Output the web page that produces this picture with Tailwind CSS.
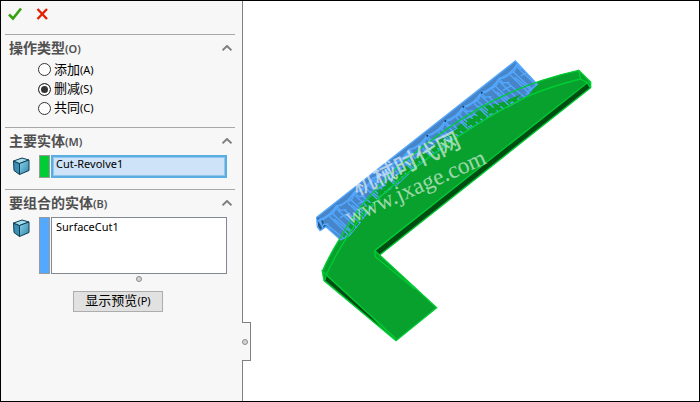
<!DOCTYPE html>
<html lang="zh-CN">
<head>
    <meta charset="UTF-8">
    <meta name="viewport" content="width=device-width, initial-scale=1.0">
    <title>组合</title>
    <script src="https://cdn.jsdelivr.net/npm/@tailwindcss/browser@4"></script>
</head>
<body class="font-['Noto_Sans','Noto_Sans_CJK_SC',sans-serif] text-black">
<div class="flex min-h-screen border border-black bg-white">

    <!-- Property panel -->
    <aside class="relative w-[242px] shrink-0 bg-[#f7f7f7] border-r border-[#808080] pl-1 pr-[7px]">
        <div class="flex h-[33px] pt-1.5 pl-[3px] gap-3.5">
            <button type="button" aria-label="确定" class="size-3.5">
                <svg viewBox="0 0 14 14" class="size-3.5" fill="none" stroke="#37a00f" stroke-width="2.6"><path d="M1 7.500 5 11.500 13 1.500"/></svg>
            </button>
            <button type="button" aria-label="取消" class="size-3.5">
                <svg viewBox="0 0 14 14" class="size-3.5" fill="none" stroke="#e02000" stroke-width="2.4"><path d="M1.500 2 11 12M11 2 1.500 12"/></svg>
            </button>
        </div>

        <!-- Operation type -->
        <section class="border-t border-[#a8a8a8] pt-px pb-2.5">
            <div class="flex h-6 items-center justify-between pl-1 pr-[3px]">
                <h2 id="opType" class="text-sm leading-6 font-bold text-[#505050]">操作类型<span class="text-[11px] font-semibold">(O)</span></h2>
                <button type="button" aria-label="折叠操作类型">
                    <svg viewBox="0 0 10 6" class="w-2.5 h-1.5" fill="none" stroke="#808080" stroke-width="2"><path d="M.5 5.3 5 1 9.500 5.300"/></svg>
                </button>
            </div>
            <div role="radiogroup" aria-labelledby="opType" class="pl-[33px]">
                <label class="flex h-[19px] items-center gap-[3px] text-[13px]">
                    <input type="radio" name="op" class="appearance-none size-[13px] rounded-full border border-[#333] bg-white checked:bg-[#333] checked:border-[#333] checked:shadow-[inset_0_0_0_2px_white]">
                    <span>添加<span class="text-[11px]">(A)</span></span>
                </label>
                <label class="flex h-5 items-center gap-[3px] text-[13px]">
                    <input type="radio" name="op" checked class="appearance-none size-[13px] rounded-full border border-[#333] bg-white checked:bg-[#333] checked:border-[#333] checked:shadow-[inset_0_0_0_2px_white]">
                    <span>删减<span class="text-[11px]">(S)</span></span>
                </label>
                <label class="flex h-[18px] items-center gap-[3px] text-[13px]">
                    <input type="radio" name="op" class="appearance-none size-[13px] rounded-full border border-[#333] bg-white checked:bg-[#333] checked:border-[#333] checked:shadow-[inset_0_0_0_2px_white]">
                    <span>共同<span class="text-[11px]">(C)</span></span>
                </label>
            </div>
        </section>

        <!-- Main body -->
        <section class="border-t border-[#a8a8a8] pt-px pb-[11px]">
            <div class="flex h-6 items-center justify-between pl-1 pr-[3px]">
                <h2 class="text-sm leading-6 font-bold text-[#505050]"><label for="mainBody">主要实体<span class="text-[11px] font-semibold">(M)</span></label></h2>
                <button type="button" aria-label="折叠主要实体">
                    <svg viewBox="0 0 10 6" class="w-2.5 h-1.5" fill="none" stroke="#808080" stroke-width="2"><path d="M.5 5.3 5 1 9.500 5.300"/></svg>
                </button>
            </div>
            <div class="flex mt-0.5 h-[23px] pl-2 pr-2">
                <svg viewBox="0 0 17 18" class="w-[17px] h-[18px] mt-0.5 mr-[9px] shrink-0" stroke="#0d3c55" stroke-linejoin="round">
                    <defs>
                        <linearGradient id="cubeFace" x1="0" y1="0" x2="1" y2="1"><stop offset="0" stop-color="#8fd3ea"/><stop offset="1" stop-color="#2f86a8"/></linearGradient>
                    </defs>
                    <path d="M.5 4 6.500 6.500V17.500L1 13.500Z" fill="#3b8fb2"/>
                    <path d="M.5 4 9 1 16 3 6.500 6.500Z" fill="#a5dcec"/>
                    <path d="M6.500 6.500 16 3V13.500L6.500 17.500Z" fill="url(#cubeFace)"/>
                </svg>
                <span class="w-[11px] mr-px bg-[#00cc33] border border-[#999] shrink-0"></span>
                <input id="mainBody" type="text" value="Cut-Revolve1" readonly class="min-w-0 flex-1 border-2 border-[#5aade0] bg-[#cee3f7] shadow-[inset_0_0_0_1px_#8fc6ee] pl-[3px] pb-1 text-[11px] outline-none">
            </div>
        </section>

        <!-- Bodies to combine -->
        <section class="border-t border-[#a8a8a8] pt-px">
            <div class="flex h-6 items-center justify-between pl-1 pr-[3px]">
                <h2 class="text-sm leading-6 font-bold text-[#505050]"><label for="combineBodies">要组合的实体<span class="text-[11px] font-semibold">(B)</span></label></h2>
                <button type="button" aria-label="折叠要组合的实体">
                    <svg viewBox="0 0 10 6" class="w-2.5 h-1.5" fill="none" stroke="#808080" stroke-width="2"><path d="M.5 5.3 5 1 9.500 5.300"/></svg>
                </button>
            </div>
            <div class="flex mt-0.5 h-[57px] pl-2 pr-2">
                <svg viewBox="0 0 17 18" class="w-[17px] h-[18px] mt-0.5 mr-[9px] shrink-0" stroke="#0d3c55" stroke-linejoin="round">
                    <path d="M.5 4 6.500 6.500V17.500L1 13.500Z" fill="#3b8fb2"/>
                    <path d="M.5 4 9 1 16 3 6.500 6.500Z" fill="#a5dcec"/>
                    <path d="M6.500 6.500 16 3V13.500L6.500 17.500Z" fill="url(#cubeFace)"/>
                </svg>
                <span class="w-[11px] mr-px bg-[#55a8ff] border border-[#999] shrink-0"></span>
                <select id="combineBodies" size="3" class="appearance-none min-w-0 flex-1 overflow-hidden border border-[#828790] bg-white text-[11px] outline-none">
                    <option class="px-1 py-px leading-4">SurfaceCut1</option>
                </select>
            </div>
            <div class="flex justify-center mt-0.5 pl-[38px]">
                <span class="size-1.5 rounded-full border border-[#8c8c8c] bg-[#d4d4d4]"></span>
            </div>
            <button type="button" class="block w-[90px] h-[21px] mt-[9px] ml-[68px] pb-1 border border-[#adadad] bg-[#e1e1e1] text-[13px] leading-4">显示预览<span class="text-[11px]">(P)</span></button>
        </section>

        <!-- Splitter handle -->
        <button type="button" aria-label="隐藏面板" class="absolute left-full top-[321px] flex w-[9px] h-[39px] items-center border border-l-0 border-[#808080] bg-[#f7f7f7]">
            <span class="size-1.5 rounded-full border border-[#8c8c8c] bg-[#d4d4d4]"></span>
        </button>
    </aside>

    <!-- Model view -->
    <main class="min-w-0 flex-1">
        <svg viewBox="-171 -147 1368 1200" preserveAspectRatio="xMinYMin meet" class="w-full" fill="none" role="img" aria-label="模型">
            <defs>
                <clipPath id="toolClip">
                    <path d="M50 502 646 33 712 103 680 140 620 172 555 210 492 246 440 285 385 322 330 365 282 412 232 448 185 515 145 560 122 570 78 530 50 510Z"/>
                </clipPath>
                <!-- one tooth of the blue body -->
                <g id="tooth">
                    <path d="M-54 43Q-20 32 0 0Q24 4 54 -43"/>
                    <path d="M0 0 10 14 30 12M0 0-8 20-22 30"/>
                    <path d="M-4 6 60 66M-12 24 44 76M-22 32 38 90M22 12 78 58"/>
                    <path d="M-8 40 48 84 25 92M44 84 78 58M10 36 36 22"/>
                </g>
            </defs>

            <!-- green body -->
            <path d="M67 664Q86 620 118 568Q175 460 300 345Q420 245 540 173Q680 95 836 61L872 96V113L240 614 410 773 288 872 72 692Z" fill="#09a12e"/>
            <path d="M862 97 872 112 240 614 226 602Z" fill="#004d14"/>
            <path d="M75 674 200 784 240 830 75 690Z" fill="#004d14"/>

            <!-- blue body -->
            <path d="M50 502 646 33 712 103 680 140 555 168 440 253 330 335 232 420 180 475 122 570 78 530 60 542Z" fill="#4686c8"/>
            <path d="M50 502 55 532 62 542 78 530 66 508Z" fill="#265580"/>
            <g clip-path="url(#toolClip)" stroke="#55a8ff" stroke-width="4">
                <use href="#tooth" x="652" y="42"/>
                <use href="#tooth" x="598" y="85"/>
                <use href="#tooth" x="544" y="128"/>
                <use href="#tooth" x="490" y="170"/>
                <use href="#tooth" x="436" y="213"/>
                <use href="#tooth" x="382" y="256"/>
                <use href="#tooth" x="328" y="298"/>
                <use href="#tooth" x="274" y="341"/>
                <use href="#tooth" x="220" y="383"/>
                <use href="#tooth" x="165" y="426"/>
                <use href="#tooth" x="110" y="467"/>
                <use href="#tooth" x="56" y="510"/>
            </g>
            <!-- green showing through between the teeth -->
            <g fill="#09a12e">
                <path d="M622 150 664 132 650 148 628 158Z"/>
                <path d="M562 182 606 160 596 178 564 194Z"/>
                <path d="M500 216 548 190 540 208 502 230Z"/>
                <path d="M450 250 488 226 482 242 448 266Z"/>
                <path d="M396 290 434 264 428 284 394 306Z"/>
                <path d="M340 332 376 306 372 322 338 348Z"/>
                <path d="M284 384 324 348 322 362 286 396Z"/>
                <path d="M234 430 270 396 272 408 236 440Z"/>
                <path d="M188 486 220 448 222 456 190 498Z"/>
            </g>
            <g stroke="#55a8ff" stroke-width="4">
                <path d="M78 530 60 542 52 530 50 502 646 33 712 103 680 128M78 530 122 570 145 558M60 505 66 530 74 520M56 512 70 535"/>
                <path d="M680 140 622 172M614 175 558 205M550 212 500 243M492 248 444 280M440 288 386 322M382 327 334 362M328 370 286 410M278 410 232 448M225 458 185 510M182 516 146 560" stroke-width="3"/>
            </g>
            <g fill="#123560">
                <circle cx="545" cy="128" r="3"/><circle cx="490" cy="170" r="3"/><circle cx="436" cy="213" r="3"/><circle cx="382" cy="257" r="3"/>
            </g>

            <!-- green edges -->
            <g stroke="#00cc33" stroke-width="4">
                <path d="M67 664Q86 620 118 568Q175 460 300 345Q420 245 540 173Q680 95 836 61L872 96V113L240 614"/>
                <path d="M78 676Q125 575 190 492Q290 385 410 305Q540 210 680 140Q760 106 842 87L836 61M842 87 862 98 872 96M862 98 870 112"/>
                <path d="M862 98 224 602 226 620 345 718M224 602 410 773 288 872 72 692 67 664 288 866M78 676 75 690"/>
            </g>

            <!-- watermark -->
            <g fill="#ffffff" fill-opacity=".6">
                <text x="170" y="438" transform="rotate(-25 170 438)" font-size="70" class="font-['Noto_Sans_CJK_SC',sans-serif] font-medium">机械时代网</text>
                <text x="148" y="524" transform="rotate(-24 148 524)" font-size="70" class="font-['Liberation_Serif',serif]">www.jxage.com</text>
            </g>
        </svg>
    </main>
</div>
</body>
</html>
